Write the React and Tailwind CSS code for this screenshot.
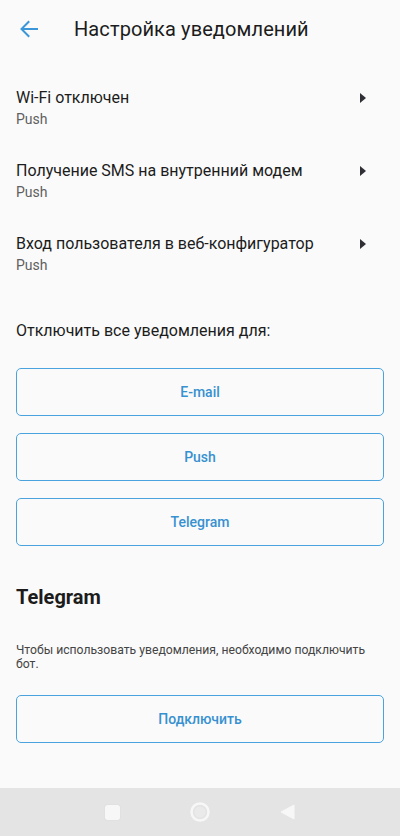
export default function App() {
  const items = [
    "Wi-Fi отключен",
    "Получение SMS на внутренний модем",
    "Вход пользователя в веб-конфигуратор",
  ];
  const channels = ["E-mail", "Push", "Telegram"];

  return (
    <div
      className="w-[400px] h-[836px] bg-[#fafafa] flex flex-col text-[#1c1c1c]"
      style={{ fontFamily: "Roboto, 'Noto Sans', sans-serif" }}
    >
      <div className="flex-1 flex flex-col">
        {/* top bar */}
        <div className="h-[58px] flex items-center">
          <div className="w-[74px] pl-[19px] flex items-center">
            <svg width="20" height="18" viewBox="0 0 20 18" fill="none">
              <path d="M18 9H3M9.5 2L2.5 9l7 7" stroke="#3b97d8" strokeWidth="2" strokeLinecap="square" />
            </svg>
          </div>
          <h1 className="text-[20px] leading-none font-normal tracking-[0.1px]">Настройка уведомлений</h1>
        </div>

        {/* event list */}
        <div className="flex flex-col mt-[28px]">
          {items.map((t) => (
            <div key={t} className="h-[73px] pl-4 pr-[34px] flex items-start">
              <div className="flex-1 flex flex-col">
                <span className="text-[16px] leading-[24px]">{t}</span>
                <span className="text-[14px] leading-[18px] text-[#5f5f5f]">Push</span>
              </div>
              <svg width="6" height="10" viewBox="0 0 6 10" className="mt-[7px]">
                <path d="M0 0L6 5L0 10Z" fill="#2f2f35" />
              </svg>
            </div>
          ))}
        </div>

        <div className="px-4 mt-[14px]">
          <p className="text-[16px] leading-[24px]">Отключить все уведомления для:</p>
          <div className="flex flex-col gap-[17px] mt-[25px]">
            {channels.map((c) => (
              <button
                key={c}
                className="h-[48px] w-full rounded-[5px] border-[1.5px] border-[#4aa3dc] text-[#3791d0] text-[14px] font-medium"
              >
                {c}
              </button>
            ))}
          </div>

          <h2 className="text-[20px] font-bold leading-[24px] mt-[39px]">Telegram</h2>
          <p className="text-[12.2px] leading-[14px] text-[#444] mt-[34px]">
            Чтобы использовать уведомления, необходимо подключить бот.
          </p>
          <button className="h-[48px] w-full rounded-[5px] border-[1.5px] border-[#4aa3dc] text-[#3791d0] text-[14px] font-medium mt-[24px]">
            Подключить
          </button>
        </div>
      </div>

      {/* system navigation bar */}
      <div className="h-[48px] bg-[#e4e4e4] flex items-center justify-center gap-[69px]">
        <div className="w-[15px] h-[15px] rounded-[2px] bg-[#f7f7f7] shadow-[0_0_1px_rgba(0,0,0,0.15)]" />
        <svg width="22" height="22" viewBox="0 0 22 22">
          <circle cx="11" cy="11" r="8.5" fill="none" stroke="#f7f7f7" strokeWidth="2.5" />
          <circle cx="11" cy="11" r="5.5" fill="#eaeaea" />
        </svg>
        <svg width="16" height="16" viewBox="0 0 16 16">
          <path d="M14 1L14 15L1 8Z" fill="#f7f7f7" strokeLinejoin="round" stroke="#f7f7f7" strokeWidth="1" />
        </svg>
      </div>
    </div>
  );
}
